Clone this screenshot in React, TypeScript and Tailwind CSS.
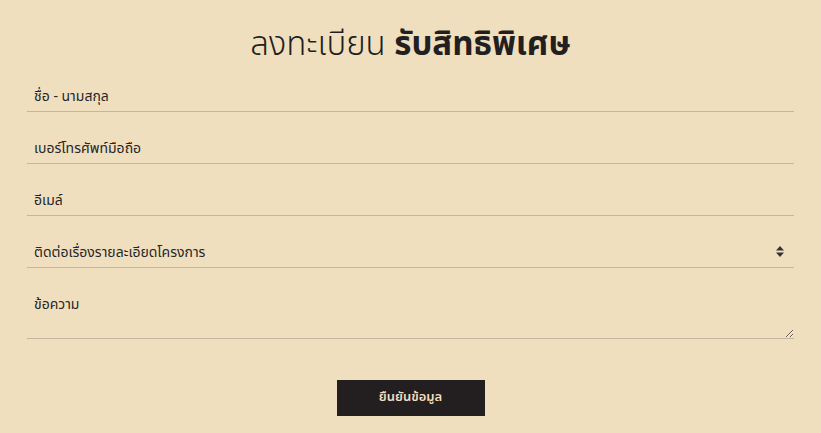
import React from "react";

const font = { fontFamily: '"Noto Sans Thai", "Noto Sans", sans-serif' };

export default function App() {
  const fieldCls =
    "w-full bg-transparent border-0 border-b border-[#c2b6a1] outline-none text-[14px] leading-[20px] text-[#262626] placeholder:text-[#262626] px-[7px] pt-[19px] pb-[4px]";
  return (
    <div className="w-[821px] h-[433px] bg-[#f0dfbf] overflow-hidden" style={font}>
      <div className="px-[27px] pt-[22px]">
        <h1 className="text-center text-[33px] leading-[46px] text-[#231f20] font-light">
          ลงทะเบียน <span className="font-bold">รับสิทธิพิเศษ</span>
        </h1>
        <form className="flex flex-col gap-[8px] mt-[0px]">
          <input className={fieldCls} placeholder="ชื่อ - นามสกุล" />
          <input className={fieldCls} placeholder="เบอร์โทรศัพท์มือถือ" />
          <input className={fieldCls} placeholder="อีเมล์" />
          <div className="relative">
            <select className={fieldCls + " appearance-none h-[44px]"} defaultValue="a">
              <option value="a">ติดต่อเรื่องรายละเอียดโครงการ</option>
            </select>
            <svg
              className="absolute right-[10px] top-[22px] pointer-events-none"
              width="8"
              height="11"
              viewBox="0 0 8 11"
            >
              <path d="M4 0 L8 4.5 H0 Z" fill="#333" />
              <path d="M4 11 L8 6.5 H0 Z" fill="#333" />
            </svg>
          </div>
          <textarea className={fieldCls + " h-[63px] resize-y"} placeholder="ข้อความ" />
        </form>
        <div className="flex justify-center mt-[41px]">
          <button className="w-[148px] h-[36px] bg-[#231f20] text-[#f0dfbf] text-[13px] font-semibold">
            ยืนยันข้อมูล
          </button>
        </div>
      </div>
    </div>
  );
}
